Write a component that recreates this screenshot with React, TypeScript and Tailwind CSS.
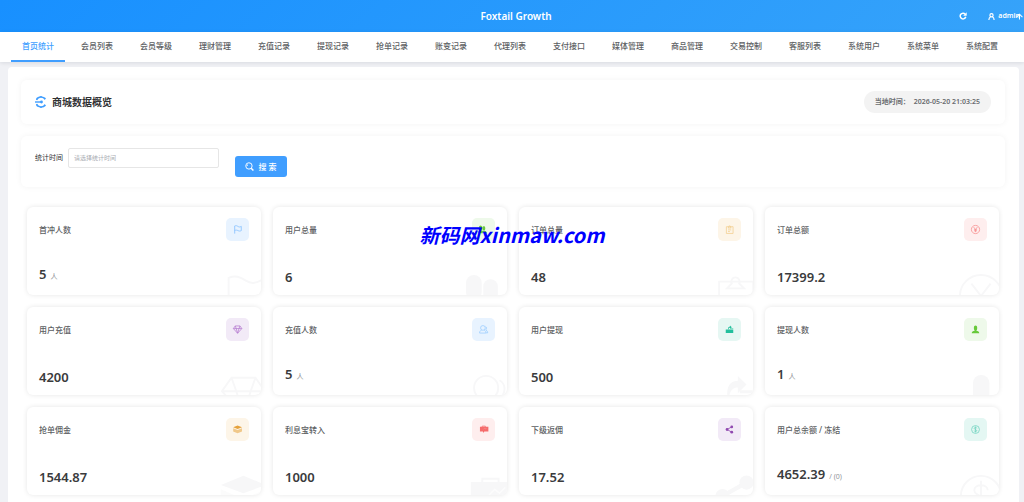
import type { ReactNode } from "react";
import clsx from "clsx";

type IconProps = { className?: string };

type Stat = {
  label: string;
  value: string;
  unit?: string;
  tile: string;
  icon: ReactNode;
};

const NAV_ITEMS = [
  "首页统计",
  "会员列表",
  "会员等级",
  "理财管理",
  "充值记录",
  "提现记录",
  "抢单记录",
  "账变记录",
  "代理列表",
  "支付接口",
  "媒体管理",
  "商品管理",
  "交易控制",
  "客服列表",
  "系统用户",
  "系统菜单",
  "系统配置",
];

function RefreshIcon({ className }: IconProps) {
  return (
    <svg viewBox="0 0 24 24" fill="none" stroke="currentColor" strokeWidth="4.5" className={className}>
      <path d="M18.5 6.5A8.5 8.5 0 1 0 20.3 14.5" />
      <path d="M23 1V11.5H12.5Z" fill="currentColor" stroke="none" />
    </svg>
  );
}

function UserIcon({ className }: IconProps) {
  return (
    <svg viewBox="0 0 24 24" fill="none" stroke="currentColor" strokeWidth="4" className={className}>
      <circle cx="12" cy="7.5" r="5.5" />
      <path d="M3 24C3 18 5 15 9 13M21 24C21 18 19 15 15 13" />
    </svg>
  );
}

function ArrowUpIcon({ className }: IconProps) {
  return (
    <svg viewBox="0 0 24 24" fill="none" stroke="currentColor" strokeWidth="3.5" className={className}>
      <path d="M2 14 12 4 22 14M12 5V22" />
    </svg>
  );
}

function GaugeIcon({ className }: IconProps) {
  return (
    <svg viewBox="0 0 24 24" fill="none" stroke="currentColor" strokeWidth="2.8" className={className}>
      <path d="M20.5 6.5A10 10 0 0 0 3 8M3 16A10 10 0 0 0 20.5 17.5" />
      <path d="M0 12H14" />
      <circle cx="13" cy="12" r="2.8" fill="currentColor" stroke="none" />
      <path d="M12 0V3M12 21V24M20.5 3.5 18.5 6M20.5 20.5 18.5 18M3.5 3.5 5.5 6M3.5 20.5 5.5 18" />
    </svg>
  );
}

function SearchIcon({ className }: IconProps) {
  return (
    <svg viewBox="0 0 24 24" fill="none" stroke="currentColor" strokeWidth="2.5" className={className}>
      <circle cx="10.5" cy="10.5" r="8.5" />
      <path d="M5.5 10.5A5 5 0 0 1 8 6.5" />
      <path d="M16.5 16.5 22.5 22.5" strokeWidth="4" />
    </svg>
  );
}

const flag = <path d="M4.5 23V2.5C8 1 10.5 2 13.5 4S19 5.500 22 3.500V15C19 16.500 16.500 16.500 13.500 15S8 13 4.500 14.500" />;

const users = (
  <g fill="currentColor" stroke="none">
    <rect x="0" y="1" width="8.200" height="13" rx="4.100" />
    <rect x="9" y="3.200" width="7.600" height="11.500" rx="3.800" />
    <path d="M-3 22C-3 17 0 14.500 4 14L12 16 13 14.500C17 15 20 17 20 22Z" />
  </g>
);

const clipboard = (
  <>
    <path d="M3.700 4.500H21.500V22.500H3.700Z" />
    <path d="M7.800 8 10.300 5.500A2.200 2.200 0 1 1 14.200 5.500L16.700 8Z" />
    <path d="M8 13H16.500M8 17.500H13" />
  </>
);

const yen = (
  <>
    <circle cx="12" cy="12" r="11" />
    <path d="M7 5.500 12 12 17 5.500M12 12V19M8 12.500H16M8 15.500H16" />
  </>
);

const gem = (
  <path d="M6 2.500H18.500L23.500 9.500 12.200 22 1 9.500ZM1 9.500H23.500M6 2.500 8.500 9.500 12.200 22 16 9.500 18.500 2.500" />
);

const userOutline = (
  <>
    <circle cx="10.500" cy="7.800" r="6.300" />
    <path d="M17.500 3.800C20.500 5.500 21 9.500 18.500 12.500L23 18.500V21H19" />
    <path d="M7 13.500C3 15 1.500 17.500 1.500 21.500H18.500C18.500 17.500 17 15 14 13.500" />
  </>
);

const withdraw = (
  <g fill="currentColor" stroke="none">
    <path d="M8 12C7.500 6.500 10 4 13.500 4V1.500L18 6 13.500 10.500V7.500C11 7.500 9.500 9 9 12Z" />
    <path d="M14.500 9H22V12H2V21H22V10.500H14.500Z" />
  </g>
);

const person = (
  <g fill="currentColor" stroke="none">
    <rect x="7.800" y="1" width="8.600" height="14" rx="4.300" />
    <path d="M10 12H14V15.500C19 16.500 22 18 22 22H2C2 18 5 16.500 10 15.500Z" />
  </g>
);

const layers = (
  <g fill="currentColor" stroke="none">
    <path d="M12.200 1.400 24 6.300 12.200 10.500 0.500 6.300Z" />
    <path d="M0.500 8.500 12.200 13.500 24 8.500V17L12.200 22 0.500 17Z" opacity="0.55" />
  </g>
);

const board = (
  <>
    <path d="M2.500 4.700H25V17.500H14L12.200 21 10.500 17.500H2.500Z" fill="currentColor" stroke="none" />
    <path d="M8.500 5V3H17V5" fill="none" />
    <path d="M12 11.500 15 8.500 17.500 10.500 20.500 7.500" fill="none" stroke="#fff" strokeOpacity="0.6" strokeWidth="0.800" />
  </>
);

const share = (
  <g fill="currentColor">
    <path d="M18 5 5.500 12 18 19" fill="none" strokeWidth="2.200" />
    <circle cx="18" cy="5" r="3.700" stroke="none" />
    <circle cx="5.500" cy="12" r="3.700" stroke="none" />
    <circle cx="18" cy="19" r="3.700" stroke="none" />
  </g>
);

const dollar = (
  <>
    <circle cx="12" cy="12" r="10.500" />
    <path d="M15.500 9C15.500 5.500 8.500 5.500 8.500 9S15.500 12 15.500 15.200 8.500 18.500 8.500 15M12 4V20" />
  </>
);

const STATS: Stat[] = [
  { label: "首冲人数", value: "5", unit: "人", tile: "bg-[#e8f3ff] text-[#7dbcff]", icon: flag },
  { label: "用户总量", value: "6", tile: "bg-[#eef9ea] text-[#67c93a]", icon: users },
  { label: "订单总量", value: "48", tile: "bg-[#fdf5e8] text-[#f2cd8e]", icon: clipboard },
  { label: "订单总额", value: "17399.2", tile: "bg-[#feeeee] text-[#f78c8c]", icon: yen },
  { label: "用户充值", value: "4200", tile: "bg-[#f2eaf7] text-[#b57bd0]", icon: gem },
  { label: "充值人数", value: "5", unit: "人", tile: "bg-[#e8f3ff] text-[#9accff]", icon: userOutline },
  { label: "用户提现", value: "500", tile: "bg-[#e6f7f3] text-[#22bf9c]", icon: withdraw },
  { label: "提现人数", value: "1", unit: "人", tile: "bg-[#eef9ea] text-[#67c93a]", icon: person },
  { label: "抢单佣金", value: "1544.87", tile: "bg-[#fdf5e8] text-[#e6a23c]", icon: layers },
  { label: "利息宝转入", value: "1000", tile: "bg-[#feeeee] text-[#f56c6c]", icon: board },
  { label: "下级返佣", value: "17.52", tile: "bg-[#f2eaf7] text-[#9048b0]", icon: share },
  { label: "用户总余额 / 冻结", value: "4652.39", unit: "/ (0)", tile: "bg-[#e4f7f3] text-[#6fd3bf]", icon: dollar },
];

function StatCard({ label, value, unit, tile, icon }: Stat) {
  return (
    <article className="relative flex h-[88px] flex-col justify-between overflow-hidden rounded-md bg-white px-3 pt-[11px] pb-2 shadow-[0_0_5px_rgba(0,0,0,0.1)]">
      <div className="flex items-center justify-between">
        <h3 className="text-[8px] leading-3 font-medium text-[#5c5e62]">{label}</h3>
        <span className={clsx("flex size-[23px] items-center justify-center rounded-[5px]", tile)}>
          <svg viewBox="0 0 24 24" fill="none" stroke="currentColor" strokeWidth="2" className="size-[9px] overflow-visible">
            {icon}
          </svg>
        </span>
      </div>
      <p className="flex items-baseline gap-1 leading-5">
        <span className="text-[13px] font-semibold text-[#3a3b3d]">{value}</span>
        {unit && <span className="text-[7px] text-[#909399]">{unit}</span>}
      </p>
      <svg
        viewBox="0 0 24 24"
        fill="none"
        stroke="currentColor"
        strokeWidth="1"
        className="pointer-events-none absolute -right-[5px] -bottom-6 size-[46px] overflow-visible text-[#f7f7f8]"
        aria-hidden="true"
      >
        {icon}
      </svg>
    </article>
  );
}

export default function App() {
  return (
    <div className="relative flex min-h-screen flex-col bg-[#f0f1f5] font-['Noto_Sans','Noto_Sans_CJK_SC',sans-serif] text-[#303133]">
      <header className="grid h-8 grid-cols-[1fr_auto_1fr] items-center bg-linear-[135deg] from-[#1890ff] to-[#36a3fa] text-white">
        <h1 className="col-start-2 pl-2 text-[10px] leading-4 font-semibold">Foxtail Growth</h1>
        <div className="flex items-center justify-end gap-[21px] pr-px">
          <button type="button" aria-label="刷新">
            <RefreshIcon className="size-2" />
          </button>
          <button type="button" className="relative flex items-center gap-[3px] pr-[3px] text-[7px] leading-3 font-semibold">
            <UserIcon className="size-[7px]" />
            admin
            <ArrowUpIcon className="absolute right-0 size-[7px]" />
          </button>
        </div>
      </header>

      <nav className="flex h-[30px] gap-[5px] bg-white px-[11px] shadow-[0_1px_4px_rgba(0,21,41,0.1)]">
        {NAV_ITEMS.map((item, index) => (
          <a
            key={item}
            href="#"
            className={clsx(
              "flex w-[54px] shrink-0 items-center justify-center border-b-2 pb-px text-[8px] leading-3 font-medium",
              index === 0 ? "border-[#409eff] text-[#409eff]" : "border-transparent text-[#5c5e62]",
            )}
          >
            {item}
          </a>
        ))}
      </nav>

      <main className="mt-[5px] mr-[5px] ml-2 flex-1 rounded-t bg-white pt-[13px] pr-[14px] pb-[7px] pl-[13px]">
        <section className="flex h-11 items-center justify-between rounded-md px-[14px] shadow-[0_0_6px_rgba(0,0,0,0.05)]">
          <h2 className="flex items-center gap-[5px] text-[10px] leading-4 font-semibold">
            <GaugeIcon className="size-3 text-[#409eff]" />
            商城数据概览
          </h2>
          <div className="flex h-[22px] items-center gap-1 rounded-full bg-[#f3f3f3] px-[11px] text-[7px] font-semibold text-[#6a6c70]">
            <span>当地时间：</span>
            <time>2026-05-20 21:03:25</time>
          </div>
        </section>

        <section className="mt-3 h-[51px] rounded-md px-[14px] pt-3 shadow-[0_0_6px_rgba(0,0,0,0.05)]">
          <form className="flex items-start gap-4">
            <div className="flex items-center gap-[5px]">
              <label htmlFor="stat-time" className="text-[7px] leading-3 text-[#303133]">
                统计时间
              </label>
              <input
                id="stat-time"
                type="text"
                placeholder="请选择统计时间"
                className="h-5 w-[151px] rounded-xs border border-[#e6e6e6] px-[5px] text-[6px] outline-none placeholder:text-[#a8abb2]"
              />
            </div>
            <button
              type="button"
              className="mt-2 flex h-[21px] w-[52px] items-center justify-center gap-1 rounded-[3px] bg-[#409eff] text-[8px] font-medium text-white"
            >
              <SearchIcon className="size-[9px]" />
              搜 索
            </button>
          </form>
        </section>

        <section className="mt-5 grid grid-cols-4 gap-3 px-[6px]">
          {STATS.map((stat) => (
            <StatCard key={stat.label} {...stat} />
          ))}
        </section>
      </main>

      <div className="pointer-events-none absolute inset-x-0 top-[221px] text-center font-['Noto_Sans_CJK_SC',sans-serif] text-xl leading-7 font-bold text-[#0000ff] italic">
        新码网xinmaw.com
      </div>
    </div>
  );
}
